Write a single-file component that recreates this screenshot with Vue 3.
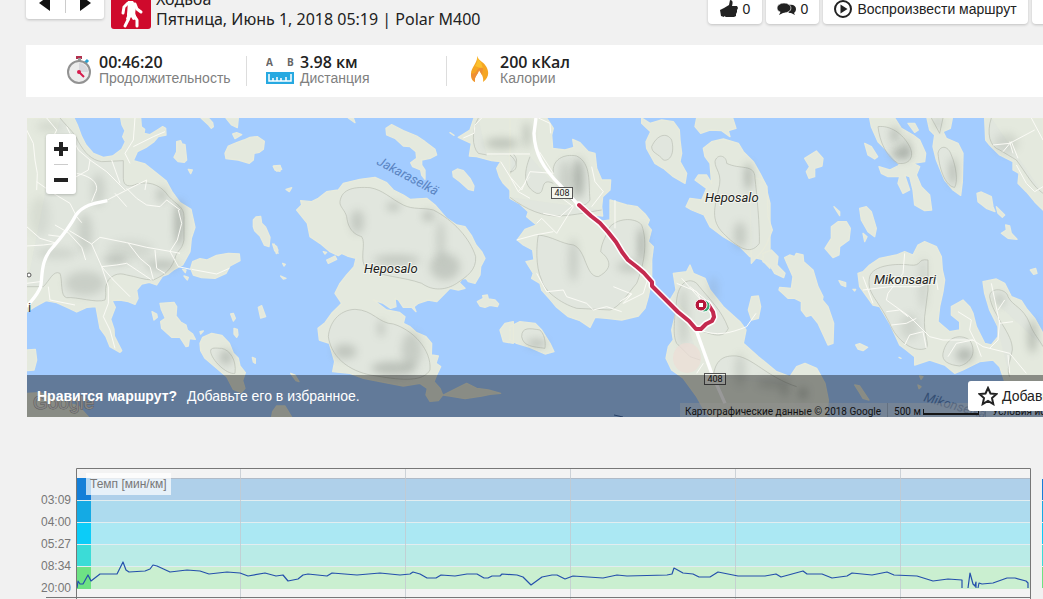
<script setup>
const stats = [
  { icon: 'watch', value: '00:46:20', label: 'Продолжительность' },
  { icon: 'ruler', value: '3.98 км', label: 'Дистанция' },
  { icon: 'flame', value: '200 кКал', label: 'Калории' }
]

const paces = ['03:09', '04:00', '05:27', '08:34', '20:00']

const bands = [
  { strong: '#147fd8', soft: '#afd0ea' },
  { strong: '#14aae4', soft: '#addbee' },
  { strong: '#0cccf8', soft: '#abe8f3' },
  { strong: '#3bdcd7', soft: '#b9ebe7' },
  { strong: '#6ee284', soft: '#caefd0' }
]

const gridLines = [164, 329, 494, 659, 824]

const paceLine =
  'M1 120 2 113 4 116H7L12 107 15 113 24 106H41L47 94 50 102 53 104 69 103 74 101 77 97 81 98 94 104 111 102 124 103 133 106 151 104 164 105 172 108 189 105 200 108 207 107 212 113 222 111 227 107 232 106 251 108 256 105 281 107 304 105 324 107 334 106 337 104 344 106 351 110H360L365 107 379 108 391 106H401L408 110H412L416 108H424L426 106 441 107 447 109 455 117 466 109 476 107H481L489 111 497 108 527 110 541 107 551 108 591 107 596 106 598 100 607 105 617 106 623 109H634L642 104 662 108H689L700 106 705 109 727 103 731 106H746L756 110 771 108 776 105 796 107 811 104 818 107 841 108 857 113 872 111 886 112V120' +
  'M892 120 894 105 897 116 899 118 900 114V120M902 120 903 115 906 116 917 115 931 110H939L950 113 952 115V120'

// map sheets: each one is drawn at three times its size on screen
const sheets = [
  {
    x: 20,
    land: [
      'M20 24H162L172 45 185 80 198 105 220 130 250 142 278 138 305 118 316 95 308 80 315 62 306 45 302 24H362L364 50 374 58 372 70 390 74 412 60 428 50 437 55 438 75 415 80 402 95 378 112 352 125 340 152 375 162 410 190 438 212 456 245 480 278 513 298 525 352 514 385 510 425 488 465 463 478 445 492 428 498 410 525 388 517 365 522 350 540 354 565 345 583 325 575 300 570 276 572 286 592 272 628 282 658 283 678 305 722 300 727 270 710 258 680 240 655 228 590 200 592 170 606 148 595 110 578 78 572 45 590 20 606Z',
      'M470 95 482 92 486 102 495 104 500 150 493 157 475 155 462 142 470 125Z',
      'M615 130 625 108 650 98 672 90 690 82 712 80 733 94 730 118 718 127 702 130 700 150 688 160 655 150 618 146Z',
      'M543 24 566 45 574 55 580 50 578 38 565 24ZM618 24 635 45 652 53 655 24ZM638 72 650 68 665 74 655 80 645 86ZM505 178 517 180 512 191Z',
      'M700 330 708 321 722 319 725 340 737 352 750 382 747 410 733 405 720 378 704 362 700 350ZM762 402 774 420 769 431Z',
      'M512 475 518 455 540 446 560 450 590 436 625 430 658 432 660 452 630 468 618 490 585 505 545 503 520 495ZM488 478 498 480 496 488ZM492 498 505 502 502 510Z',
      'M420 580 462 577 470 590 468 618 482 636 498 645 502 660 518 672 526 688 508 686 505 708 498 710 480 682 455 682 425 655 422 635 436 625 424 598Z',
      'M540 700 548 682 575 670 605 676 628 700 640 730 655 745 660 768 676 788 668 812 675 835 664 848 640 838 620 800 585 770 555 745 542 722Z',
      'M715 592 725 587 737 620 722 624ZM632 612 640 610 646 625 640 633ZM642 655 652 658 654 675 650 682 642 672ZM697 742 706 746 706 760 700 756ZM396 605 410 612 412 622 402 630ZM540 665 550 663 542 672Z',
      'M20 720 46 718 50 750 42 780 20 782ZM20 850 60 848 110 870 175 888 205 921H20ZM760 168 780 166V184L765 180Z'
    ],
    shades: [
      [235, 240, 20, 50, 0.18], [195, 370, 22, 60, 0.2], [478, 340, 12, 70, 0.5], [285, 450, 36, 8, 0.45],
      [425, 465, 50, 14, 0.3], [195, 520, 60, 36, 0.2], [425, 255, 14, 22, 0.3], [618, 742, 18, 22, 0.35],
      [110, 430, 60, 16, 0.15], [90, 50, 40, 14, 0.15], [60, 320, 30, 60, 0.1], [330, 420, 70, 30, 0.12]
    ],
    contours: [
      'M120 24C150 60 165 70 175 95 195 130 215 150 245 155L310 152V205C310 230 330 232 350 222 400 210 430 235 445 258 470 285 492 290 492 320V390C485 425 470 420 465 445 450 490 420 500 400 510 370 510 350 500 320 495 290 485 275 500 265 510 250 540 262 545 255 570 230 580 170 560 140 563 120 560 128 510 120 490 100 480 90 510 70 530L20 530',
      'M572 725C570 710 590 715 605 715 630 720 650 750 645 790 620 795 575 750 572 725Z'
    ],
    roads: [
      'M20 60 40 100 45 150 52 190 50 240M50 215 100 250 150 280 170 320 185 338M140 50 175 120 210 150 260 185 315 240M80 24 110 60 95 90M210 150 205 180 160 205M170 190C220 200 240 225 225 250L215 275M262 270 330 235 380 210M320 235 350 265 380 285 420 290 440 270 480 300M345 24 340 90 315 130 330 160M435 65 400 80 340 110M275 150 300 220M148 362 215 402 240 382 320 398 380 412 450 424 480 430M105 345 145 368 185 412 197 450M85 375 125 380M20 350 60 385 110 400 70 405 20 408M215 402 245 470 290 465 320 460 350 480 395 510M325 400 360 445 390 470 400 508M405 420 410 475 435 490M450 424 475 470 512 478M475 300 485 340 472 390 450 424M245 470 280 510 330 560M245 470 265 530 265 580 250 620 270 660 285 715M515 478 590 492 628 475M20 520 60 515M85 530 90 570 165 585M285 250 320 290M380 210 375 240'
    ],
    main: 'M262 272C220 280 190 285 168 315 150 350 130 375 100 410 60 450 68 500 62 530 50 560 35 570 20 590'
  },
  {
    x: 270,
    land: [
      'M80 300 95 285 92 272 125 275 145 265 170 245 205 240 220 220 270 208 315 202 350 218 370 240 400 255 420 268 470 265 495 285 530 325 560 345 585 350 605 378 618 405 635 425 645 445 632 470 630 495 615 520 595 515 588 505 576 507 568 518 585 535 565 540 540 535 520 555 500 575 475 570 445 580 432 590 438 605 425 592 400 592 385 570 375 565 378 590 362 595 340 580 310 570 330 585 350 600 388 607 405 620 400 640 420 650 440 668 468 680 485 700 484 735 505 738 498 760 512 770 500 795 492 815 510 835 518 855 505 872 480 874 468 855 472 835 450 820 400 828 330 815 280 805 240 790 188 785 194 755 178 700 148 690 144 655 165 638 185 610 205 590 215 580 195 550 210 520 230 495 252 470 258 445 232 438 215 430 205 437 180 425 150 400 120 380 112 340Z',
      'M348 55 365 44 400 62 440 78 465 95 495 118 500 135 480 145 455 150 455 165 465 180 465 208 455 195 452 180 428 170 422 158 440 145 438 125 420 110 400 108 375 85 350 75Z',
      'M548 185 562 177 580 182 600 205 612 228 610 242 595 238 570 215 550 200Z',
      'M10 170 30 167 35 178 20 183ZM48 238 65 233 58 245ZM235 24 255 38 250 24ZM540 68 552 76ZM8 402 20 410 24 430 14 422ZM160 425 170 427 165 432ZM170 450 195 438 200 448 175 460ZM32 498 48 505 40 507ZM38 460 46 463 42 468Z',
      'M565 82 600 60 612 24H780V290L755 270 720 240 700 220 688 200 680 175 692 155 665 152 620 140 598 138 604 100Z',
      'M622 575 640 565 638 557 652 555 655 567 675 570 686 582 682 590 660 586 645 592 630 588ZM62 790 75 795 87 815 78 812Z',
      'M520 855 560 835 590 820 620 835 655 840 692 850 660 853 635 858 585 866 540 858ZM8 905 20 888 45 888 65 921H5Z'
    ],
    shades: [
      [262, 335, 20, 36, 0.25], [370, 290, 20, 12, 0.32], [475, 318, 18, 16, 0.32], [512, 390, 12, 60, 0.22],
      [380, 450, 70, 14, 0.28], [525, 470, 45, 40, 0.25], [225, 725, 35, 22, 0.28], [333, 655, 8, 26, 0.35],
      [370, 775, 66, 20, 0.32], [425, 720, 30, 55, 0.22], [695, 100, 50, 16, 0.32], [770, 75, 8, 40, 0.4]
    ],
    contours: [
      'M210 275C215 235 255 230 300 233 340 240 360 265 400 285 430 300 460 292 490 300 550 330 600 385 617 440 620 480 590 500 560 520 530 540 490 545 455 520 400 500 330 500 290 475 265 455 290 400 275 380 260 375 235 365 230 320 225 300 208 290 210 275Z',
      'M175 680C178 640 205 600 255 598 310 600 325 640 370 642 430 660 485 720 480 780 460 815 400 812 320 798 250 790 185 750 175 680Z',
      'M625 24C605 60 605 110 625 130L650 135M730 132C755 160 725 170 722 190'
    ],
    roads: ['M580 84 612 70 615 45 635 24M650 132H780M692 155 720 200 745 245 780 265M745 245 765 220 780 200'],
    main: ''
  },
  {
    x: 510,
    land: [
      'M0 24H110L130 55 125 75 128 115 165 120 192 112 188 88 210 98 235 125 255 130 260 175 275 210 302 210 300 240 278 260 275 290 278 318 255 315 265 335 300 330 300 270 350 285 382 290 405 312 418 330 412 345 424 360 415 395 430 410 425 450 425 510 415 560 405 595 385 618 335 630 290 625 255 622 240 652 210 632 175 620 140 592 120 568 95 540 90 520 65 505 70 490 48 455 72 450 68 420 40 405 22 390 45 358 80 345 50 320 55 305 30 282 0 265Z',
      'M395 24 420 40 455 30 490 35 508 60 510 90 515 130 510 155 530 190 525 220 490 200 460 175 435 160 410 115 408 95 422 65 395 40Z',
      'M560 24H668L678 55 655 62 660 80 635 62 600 60 572 70 555 50ZM580 115 605 95 640 87 685 100 700 125 730 155 750 190 765 220 780 280V475L755 448 720 440 690 410 640 380 600 350 582 315 545 300 528 290 540 265 575 270 590 235 555 210 565 195 590 195 605 220 600 160 585 140Z',
      'M490 490 530 485 540 465 550 490 585 505 600 540 640 590 690 635 708 660 700 700 745 740 800 785 840 800 860 770 885 760 920 775 945 820 955 870 950 921H600L580 895 560 860 520 805 485 780 468 745 475 710 490 690 485 660 500 600 480 570 498 540Z',
      'M0 650 30 635 75 640 95 660 120 700 132 725 105 732 60 712 20 700 0 690ZM-30 660-15 640 10 635V700L-20 695Z',
      'M715 600 725 560 745 558 752 590 745 625 725 630Z'
    ],
    shades: [
      [205, 205, 16, 60, 0.45], [165, 205, 16, 56, 0.22], [190, 450, 14, 66, 0.22],
      [395, 405, 10, 55, 0.5], [360, 470, 40, 16, 0.25], [520, 620, 14, 90, 0.2], [715, 200, 9, 42, 0.5],
      [690, 375, 18, 40, 0.25], [80, 700, 30, 10, 0.38], [610, 540, 12, 40, 0.18], [690, 780, 16, 50, 0.18],
      [790, 820, 50, 16, 0.2]
    ],
    contours: [
      'M0 135C30 160 20 185 0 185M60 140C40 190 40 230 80 250 110 255 85 200 130 220M130 190C125 150 160 130 200 138 245 160 235 220 240 270 220 300 200 280 170 262M0 262C50 300 100 320 150 318 200 315 240 305 275 300M85 375C130 380 150 400 190 405 230 420 225 500 265 500 320 470 290 440 272 425 275 395 290 375 300 350 330 320 380 325 395 345 415 400 400 470 380 520 350 555 330 590 300 600L200 595C150 580 100 540 95 510 75 470 80 400 85 375',
      'M425 110C440 75 470 65 485 90 495 130 480 155 460 150 445 130 425 130 425 110Z',
      'M615 155C620 130 650 135 650 160 690 180 735 160 735 205 740 250 750 350 748 400 720 440 680 410 640 370 600 330 615 290 625 240 640 190 615 180 615 155Z',
      'M500 570C505 520 535 500 560 520 600 570 635 600 655 655 640 690 600 670 580 665M500 570C490 650 490 680 500 700L540 740 570 750M610 800C615 750 640 735 680 738 730 745 770 800 860 830',
      'M35 680C35 650 60 655 90 660 110 680 105 710 105 715 70 710 40 710 35 680Z'
    ],
    roads: [
      'M85 24 120 40 122 70M88 125 130 190 60 185 35 240 0 200M245 170 255 215 280 245 245 290M150 260 190 290 140 370 95 325 80 340M190 285 150 320 100 310M20 390 75 375 130 365M315 270 315 355M80 490 110 545 160 540 170 560 230 580 250 600 290 590 335 605M310 530 365 552 340 580 400 550 415 500M365 552 330 575M540 530 600 580M500 520 560 545 575 575M515 505 600 600M570 660C620 680 660 670 710 650L738 610M560 790 580 760'
    ],
    main: 'M78 24 72 70C74 130 100 175 150 225L205 285M560 665 605 790 645 880'
  },
  {
    x: 763,
    land: [
      'M-40 200 0 210 12 230 15 320 28 360 12 400 0 420-35 460ZM0 430 25 420 45 440 42 465 66 490 62 503 35 490 20 465 0 455Z',
      'M320 24H395L415 55 450 75 470 90 488 130 485 155 450 160 470 170 460 195 475 230 500 255 506 300 485 302 455 285 450 240 440 200 425 195 440 240 420 250 405 220 410 200 375 200 355 190 348 170 380 180 410 165 380 130 345 95 325 50Z',
      'M492 24H568L562 55 540 65 550 85 585 100 600 130 598 215 593 256 570 240 545 210 520 150 510 110 515 75 500 60Z',
      'M665 24H840V300L815 275 790 245 765 220 768 190 750 180 750 155 710 135 680 105 668 90Z',
      'M125 145 160 123 180 145 177 168 155 175 155 200 138 205 130 185 140 170ZM305 100 325 110 344 140 335 147 315 135ZM435 40 455 40 466 60 455 67ZM213 290 230 305 230 317ZM290 295 310 290 325 305 340 355 335 380 315 365 295 330Z',
      'M186 415 205 385 205 350 225 335 250 335 262 355 258 390 230 410 228 435 210 443ZM300 370 312 380 305 395ZM642 250 655 246 685 260 690 290 696 305 670 295 645 275ZM700 290 725 315 718 322 705 310ZM715 370 730 360 728 345 740 348 745 370 762 388 735 385ZM802 480 818 475 822 490 812 493Z',
      'M65 443 80 435 95 440 100 430 120 435 122 455 150 480 165 530 180 560 178 570 195 590 212 640 210 700 195 705 165 640 145 615 130 620 115 600 115 575 95 565 75 565 48 540 50 532 85 535 90 500 72 460ZM228 512 248 518 248 530 235 525ZM278 705 290 701 314 712 300 722 285 717ZM270 538 278 538 275 543Z',
      'M285 490 300 485 320 465 350 445 400 435 425 425 450 435 465 405 485 395 520 410 535 440 538 480 545 510 540 545 530 590 525 635 560 665 590 660 590 635 565 615 565 590 600 570 620 590 630 610 640 650 665 700 685 705 705 680 705 650 680 600 665 550 660 515 700 507 725 520 745 560 775 572 790 595 815 625 840 670V830H730L710 770 690 750 650 755 600 780 575 790 545 765 500 750 455 765 455 740 430 720 410 705 380 640 350 590 330 585 290 530Z',
      'M275 825 290 828 318 870 300 865 288 845ZM408 742 414 745ZM470 798 480 800 474 808ZM465 825 474 830 468 836Z'
    ],
    shades: [
      [395, 75, 10, 24, 0.45], [415, 130, 30, 20, 0.4], [430, 110, 10, 30, 0.3], [570, 185, 8, 42, 0.5],
      [525, 40, 8, 14, 0.4], [730, 100, 36, 30, 0.16], [480, 520, 10, 80, 0.2], [605, 735, 26, 22, 0.38],
      [710, 570, 14, 18, 0.3], [808, 680, 12, 50, 0.4], [440, 650, 28, 40, 0.15], [120, 850, 12, 18, 0.4],
      [65, 840, 10, 22, 0.3]
    ],
    contours: [
      'M345 50C380 45 420 70 440 110 455 140 440 165 405 160 370 140 350 95 345 50ZM525 130C530 105 555 105 565 135 580 170 585 215 575 232 550 230 530 185 525 130ZM505 24 530 70 540 24',
      'M685 24C670 70 680 110 710 120L760 150C790 190 810 230 840 250',
      'M320 500C330 465 400 460 440 465 480 470 460 445 495 450V540L485 620C480 670 500 700 490 715 450 730 400 690 380 640 340 560 310 550 320 500Z',
      'M540 730C550 680 590 670 620 690 645 730 620 760 590 768 560 765 535 755 540 730ZM680 560C680 530 730 535 735 560 750 590 780 590 800 640 810 670 830 690 840 710M680 560C690 620 750 670 748 720 740 760 730 780 740 800'
    ],
    roads: [
      'M690 105 740 100 815 60M720 125 745 95 765 145M740 95 750 130M805 24 840 90M760 165 790 220 815 245 840 230M425 430 420 490 375 550 370 570 440 620 500 680 540 690 630 690 660 710 740 730 790 790M300 540 380 530 470 530 520 510 525 540M370 605 410 600 435 620M385 645 430 640 460 625M425 705 440 675 480 665 490 715M585 605 625 630 620 660 640 700 655 740M630 690 580 700 555 740M685 520 710 640 750 635M710 630 705 690 680 715M735 735 740 790M300 500 330 580M725 570 705 600'
    ],
    main: ''
  }
]

const placeOf = (s) => `translate(${s.x} 110) scale(.33333)`
</script>

<template>
  <div class="page">
    <header class="top">
      <nav class="pager">
        <button type="button" aria-label="Назад">
          <svg width="12" height="16" viewBox="0 0 12 16"><path d="M11 0v16L0 8z" fill="#111" /></svg>
        </button>
        <button type="button" aria-label="Вперёд">
          <svg width="12" height="16" viewBox="0 0 12 16"><path d="M1 0v16l11-8z" fill="#111" /></svg>
        </button>
      </nav>
      <div class="sport">
        <svg width="40" height="40" viewBox="0 0 40 40">
          <circle cx="20" cy="7" r="4" fill="#fff" />
          <path d="M17 12h5l3 5-1 9h-8z" fill="#fff" />
          <path d="M17 14l-4 4-1 6M24 15l2 5 4 3M18 25l-1 6-3 6M22 25l4 6v6" fill="none" stroke="#fff" stroke-width="3" stroke-linecap="round" stroke-linejoin="round" />
          <path d="M17 24h7l2 6-4 1-2-3-2 4-3-2z" fill="#fff" />
        </svg>
      </div>
      <div class="title">
        <div>Ходьба</div>
        <div>Пятница, Июнь 1, 2018 05:19 | Polar M400</div>
      </div>
      <div class="actions">
        <button type="button" class="like">
          <svg width="18" height="18" viewBox="0 0 18 18"><path d="M0 10l4-2v9l-3-1zM4 8l5-3 1-5c3 0 3 3 2 6l5 0 1 2-1 2v2l-1 2v2l-2 1H6l-2-1z" fill="#222" /></svg>
          0
        </button>
        <button type="button" class="comments">
          <svg width="19" height="14" viewBox="0 0 19 14">
            <path d="M12 3c4-1 7 1 7 4 0 2-1 3-2 4l1 2-4-2c-1 0-2 0-3-1 3-1 4-4 1-7z" fill="#222" />
            <ellipse cx="7" cy="6" rx="7" ry="5" fill="#222" stroke="#fff" stroke-width=".6" />
            <path d="M4 9l-2 4 6-3z" fill="#222" />
          </svg>
          0
        </button>
        <button type="button" class="play">
          <svg width="18" height="18" viewBox="0 0 18 18">
            <circle cx="9" cy="9" r="8" fill="none" stroke="#222" stroke-width="2" />
            <path d="M6.500 4.500v9L13.500 9z" fill="#222" />
          </svg>
          Воспроизвести маршрут
        </button>
        <button type="button" class="more" aria-label="Ещё"></button>
      </div>
    </header>

    <section class="stats">
      <div v-for="s in stats" :key="s.icon" class="stat">
        <svg v-if="s.icon === 'watch'" width="26" height="30" viewBox="0 0 26 30">
          <rect x="9" y="1" width="6" height="3" fill="#b2304e" />
          <rect x="11" y="3" width="3" height="4" fill="#999" />
          <path d="M18 8l3-3" stroke="#29a3d3" stroke-width="3" />
          <circle cx="12" cy="17" r="11" fill="#ececec" stroke="#929292" stroke-width="2" />
          <path d="M12 8a9 9 0 0 1 9 9l-9 0z" fill="#d8d8dc" />
          <path d="M12 17l5 5" stroke="#d71b4c" stroke-width="2" />
          <circle cx="12" cy="17" r="2" fill="#d71b4c" />
        </svg>
        <svg v-else-if="s.icon === 'ruler'" width="28" height="30" viewBox="0 0 28 30">
          <text x="0" y="11" class="ab">A</text>
          <text x="21" y="11" class="ab">B</text>
          <rect y="17" width="28" height="12" fill="#27a9e1" />
          <path d="M3 19v7h22v-7M7 26v-3M11 26v-4M15 26v-3M20 26v-4" fill="none" stroke="#fff" stroke-width="1.500" />
        </svg>
        <svg v-else width="20" height="28" viewBox="0 0 20 28">
          <path d="M7 0c1 7-6 11-6 18 0 4 1 7 4 8-1-6 3-7 4-12 2 4 5 6 4 12 8-5 6-15-1-20-2-2-4-3-5-6z" fill="#f5a623" />
          <path d="M7 0c1 5 0 7-2 10l8 3-2-7C9 4 8 3 7 0z" fill="#fbc02d" />
          <path d="M1 17c0 4 1 7 4 9-1-6 3-7 4-12l3 5 1-7c-3-1-5 0-7 4-2 2-4 2-5 1z" fill="#ee8f35" />
        </svg>
        <div>
          <strong>{{ s.value }}</strong>
          <span>{{ s.label }}</span>
        </div>
      </div>
    </section>

    <section class="map">
      <svg class="terrain" aria-hidden="true">
        <defs>
          <filter id="relief" x="-200%" y="-200%" width="500%" height="500%">
            <feGaussianBlur stdDeviation="13" />
          </filter>
        </defs>
        <g transform="translate(-27 -118)">
          <g v-for="s in sheets" :key="s.x" :transform="placeOf(s)">
            <path v-for="d in s.land" :key="d" :d="d" class="land" />
          </g>
          <g v-for="s in sheets" :key="s.x" :transform="placeOf(s)">
            <path v-for="d in s.contours" :key="d" :d="d" class="contour" />
            <ellipse v-for="(e, i) in s.shades" :key="i" :cx="e[0]" :cy="e[1]" :rx="e[2]" :ry="e[3]" :opacity="e[4]" fill="#6d746d" filter="url(#relief)" />
            <path v-for="d in s.roads" :key="d" :d="d" class="road" />
            <path :d="s.main" class="road main" />
          </g>
          <ellipse cx="687" cy="358" rx="14" ry="15" fill="#ecddd5" opacity=".7" />

          <path class="halo" d="M579 205l12 11 9 7 8 9 8 10 6 10 6 8 9 7 7 6 8 9v4l14 14 12 12 11 9 7 8h5l5-5 6-3 2-4-1-5-5-8" />
          <path class="track" d="M579 205l12 11 9 7 8 9 8 10 6 10 6 8 9 7 7 6 8 9v4l14 14 12 12 11 9 7 8h5l5-5 6-3 2-4-1-5-5-8" />
          <circle cx="704" cy="306" r="6" fill="#3aa876" stroke="#fff" />
          <circle cx="701" cy="305" r="6" fill="#b5173b" stroke="#fff" />
          <rect x="699" y="303" width="4" height="4" fill="#fff" />

          <text x="364" y="273" class="place">Heposalo</text>
          <text x="705" y="202" class="place">Heposalo</text>
          <text x="874" y="284" class="place">Mikonsaari</text>
          <text x="376" y="164" class="water" transform="rotate(28 376 164)">Jakaraselkä</text>
          <text x="923" y="401" class="water" transform="rotate(16 923 401)">Mikonselkä</text>
          <text x="28" y="312" class="town">i</text>
          <circle cx="29" cy="275" r="2" fill="#fff" stroke="#555" />
          <g class="shield">
            <rect x="551.500" y="187.500" width="21" height="11" />
            <text x="562" y="196">408</text>
            <rect x="704.500" y="373.500" width="21" height="11" />
            <text x="715" y="382">408</text>
          </g>
          <path d="M614 415l9 2" stroke="#3f67a8" />
          <text x="33" y="409" class="google">Google</text>
        </g>
      </svg>
      <div class="zoom">
        <button type="button" aria-label="Увеличить">
          <svg width="14" height="14" viewBox="0 0 14 14"><path d="M5 0h4v5h5v4H9v5H5V9H0V5h5z" fill="#222" /></svg>
        </button>
        <button type="button" aria-label="Уменьшить">
          <svg width="14" height="4" viewBox="0 0 14 4"><path d="M0 0h14v4H0z" fill="#222" /></svg>
        </button>
      </div>
      <div class="credits">
        <span>Картографические данные © 2018 Google</span>
        <span class="scale">500 м <i></i></span>
        <a href="#">Условия использования</a>
      </div>
      <div class="favourite">
        <strong>Нравится маршрут?</strong>
        <span>Добавьте его в избранное.</span>
        <button type="button">
          <svg width="20" height="20" viewBox="0 0 20 20"><path d="M10 2l2.500 5.500 6 .6-4.500 4 1.300 6L10 15l-5.300 3.100 1.300-6-4.500-4 6-.6z" fill="none" stroke="#222" stroke-width="2" /></svg>
          Добавить
        </button>
      </div>
    </section>

    <section class="chart">
      <div class="axis">
        <span v-for="p in paces" :key="p">{{ p }}</span>
      </div>
      <div class="plot">
        <svg viewBox="0 0 955 131" preserveAspectRatio="none" aria-hidden="true">
          <rect width="955" height="131" fill="#f3f3f3" />
          <template v-for="(b, i) in bands" :key="b.soft">
            <rect x="0" :y="10 + i * 22" width="955" height="23" :fill="b.soft" />
            <rect x="0" :y="10 + i * 22" width="15" height="23" :fill="b.strong" />
            <rect v-if="i" x="0" :y="10 + i * 22" width="955" height="1" fill="#e2edf0" />
          </template>
          <rect x="15" y="10" width="940" height="1" fill="#b0bbc8" />
          <rect v-for="x in gridLines" :key="x" :x="x" y="0" width="1" height="131" fill="#c3c9cf" opacity=".8" />
          <path :d="paceLine" fill="none" stroke="#2450ac" stroke-width="1.200" stroke-linejoin="round" />
          <path d="M.5 131V.5h954V131" fill="none" stroke="#777" />
        </svg>
        <span class="legend">Темп [мин/км]</span>
      </div>
      <div class="zones">
        <i v-for="b in bands" :key="b.strong" :style="{ background: b.strong }"></i>
      </div>
    </section>
  </div>
</template>

<style>
body {
  margin: 0;
  background: #f1f1f1;
}
</style>

<style scoped>
.page {
  overflow: hidden;
  height: 100vh;
  background: #f1f1f1;
  color: #222;
  font-family: "Liberation Sans", Arial, sans-serif;
  font-size: 14px;
}

button {
  font: inherit;
  color: inherit;
  border: 0;
  padding: 0;
  background: #fff;
  cursor: pointer;
}

.top {
  display: flex;
  align-items: flex-start;
  height: 40px;
  margin: -11px -70px 16px 26px;
}

.pager {
  display: flex;
  width: 78px;
  height: 30px;
  background: #fff;
  border-radius: 3px;
  box-shadow: 0 1px 3px rgba(0, 0, 0, 0.2);
}

.pager button {
  flex: 1;
  margin: 6px 0;
  background: none;
}

.pager button + button {
  border-left: 1px solid #ccc;
}

.sport {
  width: 40px;
  height: 40px;
  margin: 0 5px 0 7px;
  border-radius: 3px;
  background: #cf0a2c;
}

.title {
  font: 16px/20px "Noto Sans", "Open Sans", sans-serif;
  white-space: nowrap;
}

.actions {
  display: flex;
  gap: 4px;
  margin-left: auto;
  padding-top: 4px;
}

.actions button {
  display: flex;
  align-items: center;
  justify-content: center;
  gap: 5px;
  height: 31px;
  border-radius: 4px;
  box-shadow: 0 1px 3px rgba(0, 0, 0, 0.2);
  white-space: nowrap;
}

.like {
  width: 54px;
}

.comments {
  width: 53px;
}

.play {
  width: 205px;
}

.more {
  width: 81px;
}

.stats {
  display: flex;
  align-items: center;
  height: 52px;
  margin: 0 -70px 21px 26px;
  padding-left: 41px;
  background: #fff;
}

.stat {
  display: flex;
  align-items: center;
  gap: 6px;
  box-sizing: border-box;
  height: 30px;
  padding-bottom: 2px;
}

.stat:first-child {
  width: 179px;
}

.stat + .stat {
  width: 200px;
  padding-left: 19px;
  border-left: 1px solid #ddd;
}

.stat:last-child {
  gap: 10px;
  padding-left: 23px;
}

.stat strong,
.stat span {
  display: block;
  white-space: nowrap;
}

.stat strong {
  font: 600 16px/16px "Open Sans", sans-serif;
}

.stat span {
  color: #808080;
  line-height: 16px;
}

.ab {
  font: bold 10px "Open Sans", sans-serif;
  fill: #666;
}

.map {
  position: relative;
  height: 299px;
  margin: 0 -70px 51px 27px;
  overflow: hidden;
  background: #a3ccff;
}

.terrain {
  display: block;
  width: 100%;
  height: 100%;
}

.land {
  fill: #e4e9de;
  stroke: #e8ebdc;
  stroke-width: 4;
  stroke-linejoin: round;
}

.contour {
  fill: rgba(221, 228, 221, 0.5);
  stroke: #b9beb3;
  stroke-width: 2;
}

.road {
  fill: none;
  stroke: #fbfbf6;
  stroke-width: 3;
}

.main {
  stroke: #fff;
  stroke-width: 10;
}

.halo,
.track {
  fill: none;
  stroke-linecap: round;
  stroke-linejoin: round;
}

.halo {
  stroke: #fff;
  stroke-width: 7;
}

.track {
  stroke: #c42a4f;
  stroke-width: 4;
}

.place {
  font: italic 13px Roboto, sans-serif;
  fill: #222;
  stroke: #f3f5ee;
  stroke-width: 2px;
  paint-order: stroke;
}

.water {
  font: italic 13px Roboto, sans-serif;
  fill: #5a84c2;
}

.town {
  font: 13px Roboto, sans-serif;
  fill: #333;
}

.shield rect {
  fill: #f4f6ee;
  stroke: #555;
}

.shield text {
  font: 9px Roboto, sans-serif;
  fill: #222;
  text-anchor: middle;
}

.google {
  font: 19px "Liberation Sans", Arial, sans-serif;
  fill: #ddd;
  stroke: #999;
  stroke-width: 1px;
  paint-order: stroke;
}

.zoom {
  position: absolute;
  top: 16px;
  left: 19px;
  width: 30px;
  padding: 0 8px;
  box-sizing: border-box;
  background: #fff;
  border-radius: 3px;
  box-shadow: 0 1px 3px rgba(0, 0, 0, 0.2);
}

.zoom button {
  display: flex;
  align-items: center;
  justify-content: center;
  width: 14px;
  height: 30px;
}

.zoom button + button {
  box-sizing: border-box;
  border-top: 1px solid #ccc;
}

.credits {
  position: absolute;
  left: 653px;
  right: 0;
  bottom: 0;
  display: flex;
  height: 14px;
  background: rgba(245, 245, 245, 0.4);
  color: #222;
  font: 10px/17px Roboto, sans-serif;
  white-space: nowrap;
}

.credits span,
.credits a {
  padding: 0 6px;
  color: inherit;
  text-decoration: none;
}

.credits span:first-child {
  padding-left: 5px;
}

.scale {
  border: solid rgba(0, 0, 0, 0.15);
  border-width: 0 1px;
}

.scale i {
  display: inline-block;
  width: 54px;
  height: 4px;
  border: solid #222;
  border-width: 0 1px 2px;
}

.favourite {
  position: absolute;
  left: 0;
  right: 0;
  bottom: 0;
  display: flex;
  align-items: center;
  gap: 10px;
  height: 42px;
  padding: 0 35px 0 10px;
  box-sizing: border-box;
  background: rgba(0, 0, 0, 0.4);
  color: #fff;
  white-space: nowrap;
}

.favourite button {
  display: flex;
  align-items: center;
  gap: 4px;
  width: 110px;
  height: 30px;
  margin-left: auto;
  padding-left: 10px;
  border-radius: 3px;
  color: #222;
}

.chart {
  position: relative;
  display: flex;
  margin-right: -28px;
}

.chart::after {
  content: "";
  position: absolute;
  left: 46px;
  right: 40px;
  top: 129px;
  height: 1px;
  background: #777;
}

.axis {
  flex: none;
  display: flex;
  flex-direction: column;
  box-sizing: border-box;
  width: 76px;
  padding: 21px 5px 0 0;
  color: #777;
  font-size: 12px;
  line-height: 22px;
  text-align: right;
}

.plot {
  position: relative;
  flex: 1;
  height: 131px;
  overflow: hidden;
}

.plot svg {
  display: block;
  width: 100%;
  height: 131px;
}

.legend {
  position: absolute;
  top: 5px;
  left: 10px;
  padding: 0 4px;
  background: rgba(255, 255, 255, 0.7);
  color: #777;
  font-size: 12px;
  line-height: 22px;
}

.zones {
  flex: none;
  display: grid;
  grid-auto-rows: 21px;
  gap: 1px;
  width: 29px;
  margin-left: 11px;
  padding-top: 11px;
}
</style>
